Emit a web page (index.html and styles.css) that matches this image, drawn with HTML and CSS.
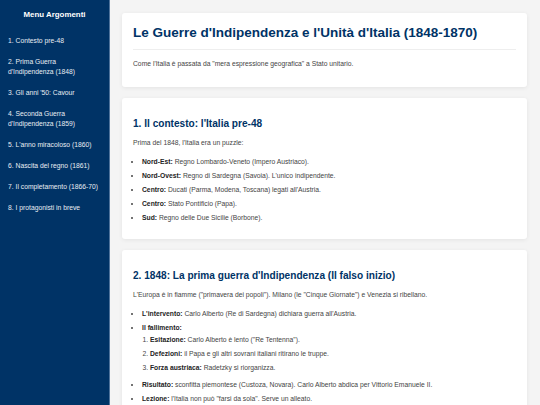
FILE: index.html
```html
<!DOCTYPE html>
<html lang="it">

<head>
  <title>Le Guerre d'Indipendenza e l'Unità d'Italia</title>
  <meta charset="utf-8">
  <link rel="stylesheet" href="styles.css">
</head>

<body>
  <nav class="sidebar">
    <h3>Menu Argomenti</h3>
    <ul class="menu">
      <li><a href="#contesto">1. Contesto pre-48</a></li>
      <li><a href="#prima">2. Prima Guerra d'Indipendenza (1848)</a></li>
      <li><a href="#cavour">3. Gli anni '50: Cavour</a></li>
      <li><a href="#seconda">4. Seconda Guerra d'Indipendenza (1859)</a></li>
      <li><a href="#mille">5. L'anno miracoloso (1860)</a></li>
      <li><a href="#regno">6. Nascita del regno (1861)</a></li>
      <li><a href="#completamento">7. Il completamento (1866-70)</a></li>
      <li><a href="#protagonisti">8. I protagonisti in breve</a></li>
    </ul>
  </nav>

  <main class="content">
    <section class="card">
      <h1>Le Guerre d'Indipendenza e l'Unità d'Italia (1848-1870)</h1>
      <p>Come l'Italia è passata da "mera espressione geografica" a Stato unitario.</p>
    </section>

    <section class="card" id="contesto">
      <h2>1. Il contesto: l'Italia pre-48</h2>
      <p>Prima del 1848, l'Italia era un puzzle:</p>
      <ul>
        <li><strong>Nord-Est:</strong> Regno Lombardo-Veneto (Impero Austriaco).</li>
        <li><strong>Nord-Ovest:</strong> Regno di Sardegna (Savoia). L'unico indipendente.</li>
        <li><strong>Centro:</strong> Ducati (Parma, Modena, Toscana) legati all'Austria.</li>
        <li><strong>Centro:</strong> Stato Pontificio (Papa).</li>
        <li><strong>Sud:</strong> Regno delle Due Sicilie (Borbone).</li>
      </ul>
    </section>

    <section class="card" id="prima">
      <h2>2. 1848: La prima guerra d'Indipendenza (Il falso inizio)</h2>
      <p>L'Europa è in fiamme ("primavera dei popoli"). Milano (le "Cinque Giornate") e Venezia si ribellano.</p>
      <ul>
        <li><strong>L'intervento:</strong> Carlo Alberto (Re di Sardegna) dichiara guerra all'Austria.</li>
        <li><strong>Il fallimento:</strong>
          <ol>
            <li><strong>Esitazione:</strong> Carlo Alberto è lento ("Re Tentenna").</li>
            <li><strong>Defezioni:</strong> il Papa e gli altri sovrani italiani ritirano le truppe.</li>
            <li><strong>Forza austriaca:</strong> Radetzky si riorganizza.</li>
          </ol>
        </li>
        <li><strong>Risultato:</strong> sconfitta piemontese (Custoza, Novara). Carlo Alberto abdica per Vittorio Emanuele II.</li>
        <li><strong>Lezione:</strong> l'Italia non può "farsi da sola". Serve un alleato.</li>
      </ul>
    </section>
  </main>
</body>

</html>
```

FILE: styles.css
```css
* {
  box-sizing: border-box;
}

html,
body {
  height: 100%;
}

body {
  margin: 0;
  display: flex;
  overflow: hidden;
  background-color: #f4f4f4;
  font-family: "Liberation Sans", Arial, sans-serif;
  font-size: 6.75px;
  line-height: 10px;
  color: #444;
}

/* left menu */
.sidebar {
  flex: 0 0 110px;
  padding: 10px 8px;
  background-color: #003366;
  border-right: 1px solid #4f739b;
  color: #fff;
  overflow-y: auto;
}

.sidebar h3 {
  margin: 0 0 10px 0;
  font-size: 7.9px;
  line-height: 10px;
  text-align: center;
}

.menu {
  list-style: none;
  margin: 0;
  padding: 0;
}

.menu li {
  margin: 0;
  padding: 5.5px 0;
}

.menu a {
  color: #e8edf3;
  text-decoration: none;
}

.menu a:hover {
  color: #fff;
}

/* main column with the cards */
.content {
  flex: 1;
  padding: 13px 13px 13px 12px;
  overflow-y: auto;
  scrollbar-width: none;
}

.card {
  background-color: #fff;
  border-radius: 3px;
  box-shadow: 0 1px 4px rgba(0, 0, 0, 0.07);
  padding: 12px 11px;
  margin-bottom: 11px;
}

h1 {
  margin: 0 0 9px 0;
  padding-bottom: 7.5px;
  border-bottom: 1px solid #eee;
  font-size: 13.5px;
  line-height: 16px;
  color: #003366;
}

h2 {
  margin: 8.5px 0 8px 0;
  font-size: 10.1px;
  line-height: 12px;
  color: #003366;
}

p {
  margin: 0 0 8.5px 0;
}

.card > p:last-child {
  margin-bottom: 6px;
}

strong {
  color: #222;
}

ul,
ol {
  margin: 0;
  padding-left: 9px;
}

li {
  margin-bottom: 4px;
}

/* sub-list inside a bullet */
li ol {
  margin: 2.5px 0 7px 0;
  padding-left: 8px;
}
```
